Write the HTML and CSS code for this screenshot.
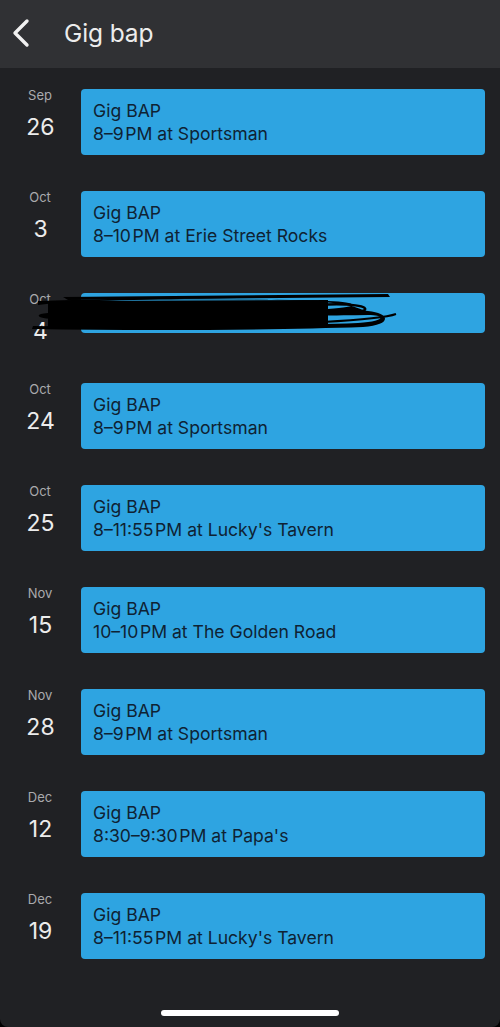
FILE: index.html
```html
<!DOCTYPE html>
<html>
<head>
<meta charset="utf-8">
<link rel="stylesheet" href="styles.css">
</head>
<body>
<div class="screen">
  <header class="topbar">
    <svg class="back" width="20" height="30" viewBox="0 0 20 30"><path d="M16 3 L4 15 L16 27" fill="none" stroke="#f1f1f1" stroke-width="3.4" stroke-linecap="round" stroke-linejoin="round"/></svg>
    <h1 class="title">Gig bap</h1>
  </header>
  <main class="list">
    <div class="row">
      <div class="date"><span class="month">Sep</span><span class="day">26</span></div>
      <div class="card"><div class="ev-title">Gig BAP</div><div class="ev-sub">8–9&#8202;PM at Sportsman</div></div>
    </div>
    <div class="row">
      <div class="date"><span class="month">Oct</span><span class="day">3</span></div>
      <div class="card"><div class="ev-title">Gig BAP</div><div class="ev-sub">8–10&#8202;PM at Erie Street Rocks</div></div>
    </div>
    <div class="row row-short">
      <div class="date"><span class="month">Oct</span><span class="day">4</span></div>
      <div class="card card-short"></div>
      <svg class="scribble" width="370" height="50" viewBox="0 0 370 50">
        <path d="M35 8 L360 5 L362 8 L40 11 Z" fill="#000"/>
        <path d="M10 16 C60 10 200 9 300 12 C330 13 335 18 300 20 C250 22 120 22 20 24 C5 25 8 30 30 30 C120 30 250 27 340 26 C358 26 358 32 330 34 C250 37 120 38 5 37 L4 40 C120 42 250 41 335 38 C365 36 362 24 340 22 C330 21 330 16 305 14 C250 9 120 8 10 12 Z" fill="#000"/>
        <path d="M20 12 L300 11 L300 37 L20 40 Z" fill="#000"/>
        <path d="M290 16 C320 14 345 17 335 22 C320 26 300 25 290 24" fill="none" stroke="#000" stroke-width="2.5"/>
        <path d="M295 33 C330 31 360 28 368 25" fill="none" stroke="#000" stroke-width="2"/>
      </svg>
    </div>
    <div class="row">
      <div class="date"><span class="month">Oct</span><span class="day">24</span></div>
      <div class="card"><div class="ev-title">Gig BAP</div><div class="ev-sub">8–9&#8202;PM at Sportsman</div></div>
    </div>
    <div class="row">
      <div class="date"><span class="month">Oct</span><span class="day">25</span></div>
      <div class="card"><div class="ev-title">Gig BAP</div><div class="ev-sub">8–11:55&#8202;PM at Lucky's Tavern</div></div>
    </div>
    <div class="row">
      <div class="date"><span class="month">Nov</span><span class="day">15</span></div>
      <div class="card"><div class="ev-title">Gig BAP</div><div class="ev-sub">10–10&#8202;PM at The Golden Road</div></div>
    </div>
    <div class="row">
      <div class="date"><span class="month">Nov</span><span class="day">28</span></div>
      <div class="card"><div class="ev-title">Gig BAP</div><div class="ev-sub">8–9&#8202;PM at Sportsman</div></div>
    </div>
    <div class="row">
      <div class="date"><span class="month">Dec</span><span class="day">12</span></div>
      <div class="card"><div class="ev-title">Gig BAP</div><div class="ev-sub">8:30–9:30&#8202;PM at Papa's</div></div>
    </div>
    <div class="row">
      <div class="date"><span class="month">Dec</span><span class="day">19</span></div>
      <div class="card"><div class="ev-title">Gig BAP</div><div class="ev-sub">8–11:55&#8202;PM at Lucky's Tavern</div></div>
    </div>
  </main>
  <div class="home-bar"></div>
</div>
</body>
</html>
```
FILE: styles.css
```css
html {
  background: #000;
}
body {
  margin: 0;
  font-family: Inter, "Noto Sans", "Liberation Sans", sans-serif;
}
.screen {
  width: 500px;
  height: 1027px;
  background: #202124;
  border-radius: 0 0 8px 8px;
  overflow: hidden;
  display: flex;
  flex-direction: column;
}
.topbar {
  height: 68px;
  flex: 0 0 68px;
  background: #303134;
  display: flex;
  align-items: center;
  box-sizing: border-box;
  padding-left: 11px;
}
.back {
  display: block;
  margin-top: -2px;
}
.title {
  margin: 0 0 0 33px;
  font-size: 24.5px;
  font-weight: 400;
  color: #ececec;
  letter-spacing: -0.1px;
  margin-top: -3px;
}
.list {
  flex: 1;
  padding-top: 21px;
  display: flex;
  flex-direction: column;
}
.row {
  position: relative;
  display: flex;
  margin-bottom: 36px;
}
.row-short {
  margin-bottom: 38px;
}
.date {
  width: 81px;
  flex: 0 0 81px;
  display: flex;
  flex-direction: column;
  align-items: center;
}
.month {
  font-size: 13px;
  line-height: 16px;
  color: #a9aaad;
  margin-top: -2px;
  padding-right: 1px;
}
.day {
  font-size: 23px;
  line-height: 28px;
  color: #ececec;
  margin-top: 10px;
}
.card {
  flex: 1;
  margin-right: 15px;
  background: #2ea4e1;
  border-radius: 4px;
  padding: 10px 12px;
  color: #0f2233;
  font-size: 17.6px;
  line-height: 23px;
}
.card-short {
  height: 40px;
  padding: 0;
  flex: 1;
}
.scribble {
  position: absolute;
  left: 28px;
  top: -4px;
}
.home-bar {
  width: 178px;
  height: 6px;
  border-radius: 3px;
  background: #fff;
  margin: 0 auto 11px;
}
```
